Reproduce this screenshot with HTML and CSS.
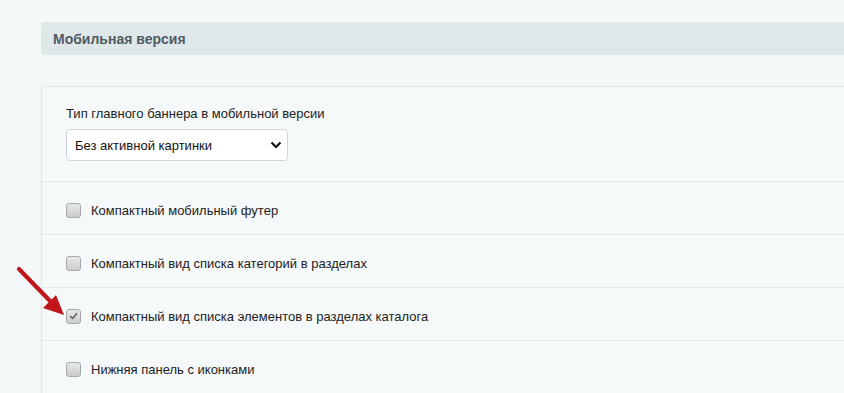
FILE: index.html
```html
<!DOCTYPE html>
<html lang="ru">
<head>
  <meta charset="UTF-8">
  <meta name="viewport" content="width=device-width, initial-scale=1.0">
  <title>Мобильная версия</title>
  <link rel="stylesheet" href="styles.css">
</head>
<body>
  <div class="page">
    <!-- Section title -->
    <div class="section-head">Мобильная версия</div>

    <div class="card">
      <div class="row row-select">
        <label class="field-label">Тип главного баннера в мобильной версии</label>
        <div class="select">
          <span>Без активной картинки</span>
          <svg class="select-arrow" width="12" height="8" viewBox="0 0 12 8">
            <path d="M1.5 1.5 L6 6 L10.5 1.5" fill="none" stroke="#111" stroke-width="2.2"/>
          </svg>
        </div>
      </div>

      <div class="row">
        <span class="check"></span>
        <span class="check-label">Компактный мобильный футер</span>
      </div>

      <div class="row">
        <span class="check"></span>
        <span class="check-label">Компактный вид списка категорий в разделах</span>
      </div>

      <div class="row">
        <span class="check checked">
          <svg width="14" height="14" viewBox="0 0 14 14">
            <path d="M3.5 7.2 L6 9.7 L10.8 4" fill="none" stroke="#555" stroke-width="1.4"/>
          </svg>
        </span>
        <span class="check-label">Компактный вид списка элементов в разделах каталога</span>
      </div>

      <div class="row">
        <span class="check"></span>
        <span class="check-label">Нижняя панель с иконками</span>
      </div>
    </div>

    <!-- Red pointer arrow -->
    <svg class="pointer" width="60" height="60" viewBox="0 0 60 60">
      <path d="M4 4 L36 37" stroke="#c0161c" stroke-width="4.2" stroke-linecap="round"/>
      <path d="M49 50 L28 43 L41 30 Z" fill="#c0161c"/>
    </svg>
  </div>
</body>
</html>
```

FILE: styles.css
```css
* {
  margin: 0;
  padding: 0;
  box-sizing: border-box;
}

body {
  background-color: #f4f8f9;
  font-family: "Liberation Sans", Arial, sans-serif;
  font-size: 13px;
  color: #222;
  overflow: hidden;
  height: 393px;
}

.page {
  position: relative;
  padding: 22px 0 0 41px;
}

.section-head {
  height: 33px;
  margin-right: -10px;
  background-color: #e0e7e9;
  border-radius: 3px 0 0 3px;
  padding: 9px 0 0 12px;
  font-weight: bold;
  font-size: 14px;
  color: #4f5b62;
}

.card {
  margin-top: 31px;
  margin-right: -10px;
  border: 1px solid #dfe5e9;
  border-radius: 3px 0 0 0;
  background-color: #f5f9fa;
}

.row {
  display: flex;
  align-items: center;
  gap: 10px;
  height: 53px;
  padding: 4px 0 0 24px;
  border-bottom: 1px solid #e1e7eb;
}

.row-select {
  display: block;
  height: 95px;
  padding-top: 19px;
}

.field-label {
  display: block;
  line-height: 16px;
  margin-bottom: 7px;
}

.select {
  width: 222px;
  height: 32px;
  background-color: #fff;
  border: 1px solid #cfd6db;
  border-radius: 4px;
  display: flex;
  align-items: center;
  justify-content: space-between;
  padding: 0 5px 0 8px;
  color: #111;
}

.check {
  width: 15px;
  height: 15px;
  border: 1px solid #a5a9ad;
  border-radius: 3px;
  background: linear-gradient(#e8e9ea, #c9cbcd);
  display: inline-flex;
  align-items: center;
  justify-content: center;
}

.check.checked {
  background: linear-gradient(#e4e5e6, #cfd1d3);
}

.check-label {
  color: #222;
}

.pointer {
  position: absolute;
  left: 15px;
  top: 265px;
}
```
